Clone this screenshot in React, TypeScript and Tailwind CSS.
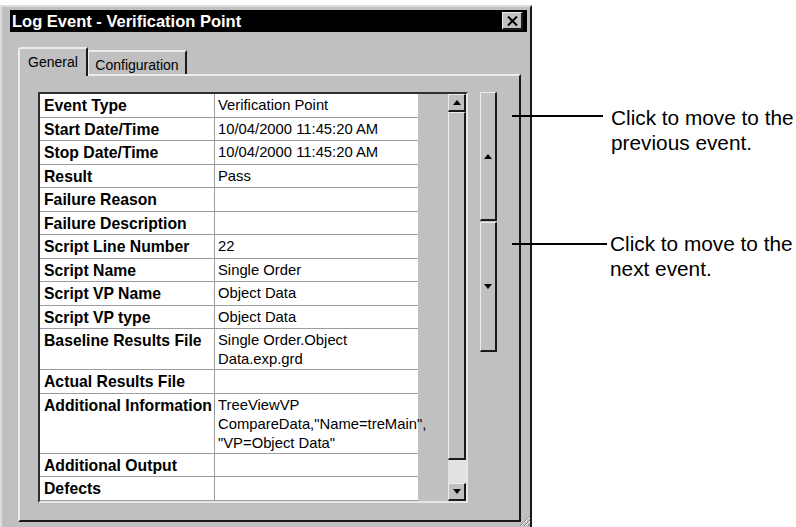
import * as React from "react";

const rows: [string, string[]][] = [
  ["Event Type", ["Verification Point"]],
  ["Start Date/Time", ["10/04/2000 11:45:20 AM"]],
  ["Stop Date/Time", ["10/04/2000 11:45:20 AM"]],
  ["Result", ["Pass"]],
  ["Failure Reason", []],
  ["Failure Description", []],
  ["Script Line Number", ["22"]],
  ["Script Name", ["Single Order"]],
  ["Script VP Name", ["Object Data"]],
  ["Script VP type", ["Object Data"]],
  ["Baseline Results File", ["Single Order.Object", "Data.exp.grd"]],
  ["Actual Results File", []],
  ["Additional Information", ["TreeViewVP", 'CompareData,"Name=treMain",', '"VP=Object Data"']],
  ["Additional Output", []],
  ["Defects", []],
  ["", []],
];

const raised =
  "bg-[#c0c0c0] border-t border-l border-t-[#ececec] border-l-[#ececec] border-r-2 border-b-2 border-r-[#1a1a1a] border-b-[#1a1a1a]";

function Arrow({ down }: { down?: boolean }) {
  return (
    <svg width="8" height="5" viewBox="0 0 8 5">
      <polygon points={down ? "0,0 8,0 4,5" : "4,0 8,5 0,5"} fill="#000" />
    </svg>
  );
}

export default function App() {
  return (
    <div className="relative flex h-[527px] w-[796px] overflow-hidden bg-white font-['Liberation_Sans',Arial,sans-serif] text-black">
      {/* dialog window */}
      <div className="relative mt-[5px] flex h-[530px] w-[532px] shrink-0 flex-col border-l-2 border-r-2 border-t-2 border-l-[#dcdcdc] border-r-[#1a1a1a] border-t-[#dcdcdc] bg-[#c0c0c0] pl-[8px] pr-[3px] pt-[3px]">
        <div className="flex h-[22px] items-center justify-between bg-black pl-[2px] pr-[4px]">
          <span className="text-[16.5px] font-bold leading-[22px] text-white">Log Event - Verification Point</span>
          <div className={`flex h-[18px] w-[21px] items-center justify-center ${raised}`}>
            <svg width="11" height="10" viewBox="0 0 11 10">
              <path d="M1 0.5 L10 9.5 M10 0.5 L1 9.5" stroke="#000" strokeWidth="2" />
            </svg>
          </div>
        </div>

        {/* tabs */}
        <div className="ml-[8px] mt-[15px] flex h-[27px] items-end">
          <div className="relative z-10 -mb-[2px] flex h-[29px] w-[70px] items-start justify-center rounded-tl-[3px] border-l-2 border-r-2 border-t-2 border-l-[#ececec] border-r-[#1a1a1a] border-t-[#ececec] bg-[#c0c0c0] pt-[4px] text-[14px] leading-[18px]">
            General
          </div>
          <div className="flex h-[24px] w-[99px] items-start justify-center border-l border-r-2 border-t-2 border-l-[#ececec] border-r-[#1a1a1a] border-t-[#ececec] pt-[4px] text-[14px] leading-[18px]">
            Configuration
          </div>
        </div>

        {/* tab panel */}
        <div className="ml-[8px] flex h-[448px] w-[503px] border-b-2 border-l-2 border-r-2 border-t-2 border-b-[#1a1a1a] border-l-[#ececec] border-r-[#1a1a1a] border-t-[#ececec] pl-[18px] pt-[16px]">
          {/* grid frame */}
          <div className="flex h-[411px] w-[430px] overflow-hidden border-b-2 border-l-2 border-r-2 border-t-2 border-b-[#e6e6e6] border-l-[#303030] border-r-[#e6e6e6] border-t-[#303030] bg-[#c0c0c0]">
            <div className="w-[378px] shrink-0 self-start bg-white">
              {rows.map(([label, value], i) => (
                <div key={i} className="flex border-b border-[#9c9c9c]">
                  <div className="min-h-[20px] w-[175px] shrink-0 whitespace-nowrap border-r border-[#9c9c9c] pb-[1.5px] pl-[4px] pt-[2px] text-[15.75px] font-bold leading-[19px]">
                    {label}
                  </div>
                  <div className="whitespace-nowrap pl-[3px] pt-[2px] text-[14.8px] leading-[19px]">
                    {value.map((v) => (
                      <div key={v}>{v}</div>
                    ))}
                  </div>
                </div>
              ))}
            </div>
            <div className="flex-1" />
            {/* vertical scrollbar */}
            <div className="flex w-[18px] shrink-0 flex-col">
              <div className={`flex h-[18px] items-center justify-center ${raised}`}>
                <Arrow />
              </div>
              <div className={`h-[348px] ${raised}`} />
              <div className="h-[23px] bg-[#e2e2e2]" />
              <div className={`flex h-[18px] items-center justify-center ${raised}`}>
                <Arrow down />
              </div>
            </div>
          </div>

          {/* previous / next buttons */}
          <div className="ml-[12px] flex w-[17px] flex-col">
            <div className={`flex h-[129px] items-center justify-center ${raised}`}>
              <Arrow />
            </div>
            <div className={`mt-[1px] flex h-[130px] items-center justify-center ${raised}`}>
              <Arrow down />
            </div>
          </div>
        </div>

        {/* resize grip */}
        <svg className="absolute left-[517px] top-[508px]" width="12" height="12" viewBox="0 0 12 12">
          <path d="M11 1 L1 11 M11 5 L5 11 M11 9 L9 11" stroke="#808080" strokeWidth="1" />
          <path d="M11 2 L2 11 M11 6 L6 11" stroke="#ffffff" strokeWidth="1" />
        </svg>
      </div>

      {/* callouts */}
      <div className="absolute left-[512px] top-[115px] h-[2px] w-[91px] bg-black" />
      <div className="absolute left-[611px] top-[105px] text-[20.8px] leading-[25px]">
        Click to move to the
        <br />
        previous event.
      </div>
      <div className="absolute left-[512px] top-[243px] h-[2px] w-[95px] bg-black" />
      <div className="absolute left-[610px] top-[231px] text-[20.8px] leading-[25px]">
        Click to move to the
        <br />
        next event.
      </div>
    </div>
  );
}
